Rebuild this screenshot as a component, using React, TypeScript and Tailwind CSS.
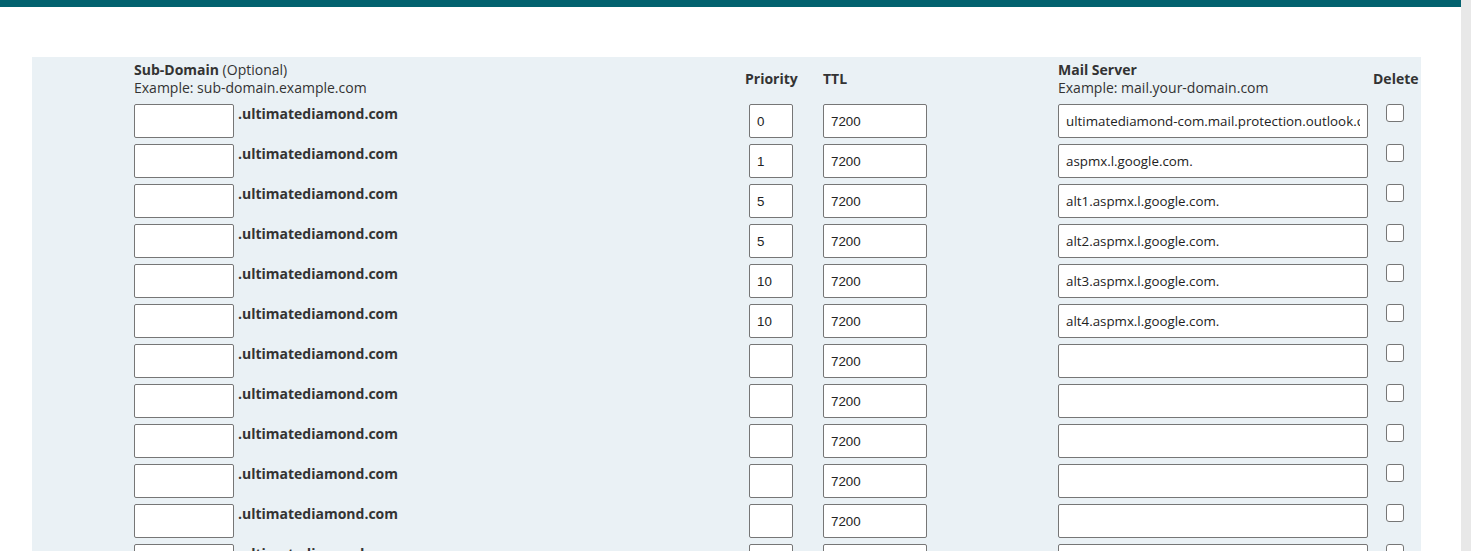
import React from "react";

const SUFFIX = ".ultimatediamond.com";

// MX records, empty ones pad the form out
const records = [
  { priority: "0", ttl: "7200", server: "ultimatediamond-com.mail.protection.outlook.com." },
  { priority: "1", ttl: "7200", server: "aspmx.l.google.com." },
  { priority: "5", ttl: "7200", server: "alt1.aspmx.l.google.com." },
  { priority: "5", ttl: "7200", server: "alt2.aspmx.l.google.com." },
  { priority: "10", ttl: "7200", server: "alt3.aspmx.l.google.com." },
  { priority: "10", ttl: "7200", server: "alt4.aspmx.l.google.com." },
  { priority: "", ttl: "7200", server: "" },
  { priority: "", ttl: "7200", server: "" },
  { priority: "", ttl: "7200", server: "" },
  { priority: "", ttl: "7200", server: "" },
  { priority: "", ttl: "7200", server: "" },
  { priority: "", ttl: "7200", server: "" },
  { priority: "", ttl: "7200", server: "" },
];

const inputBase =
  "h-[34px] border border-[#767676] rounded-[2px] bg-white px-[7px] text-[13.33px] text-[#222] outline-none";

export default function App() {
  return (
    <div className="flex min-h-screen bg-white font-['Open_Sans',sans-serif] text-[14px] leading-[18px] text-[#333]">
      <div className="flex-1 flex flex-col">
        {/* top brand bar */}
        <div className="h-[7px] bg-[#03626f] shrink-0" />

        <div className="pl-[32px] pr-[40px] pt-[50px]">
          <div className="bg-[#eaf1f5] pl-[102px] pr-[4px] pt-[4px] pb-[20px]">
            {/* header row */}
            <div className="flex items-center h-[36px]">
              <div className="w-[611px]">
                <div>
                  <span className="font-bold">Sub-Domain</span> (Optional)
                </div>
                <div>Example: sub-domain.example.com</div>
              </div>
              <div className="w-[52px] text-center font-bold">Priority</div>
              <div className="w-[26px]" />
              <div className="w-[235px] font-bold">TTL</div>
              <div className="w-[315px]">
                <div className="font-bold">Mail Server</div>
                <div>Example: mail.your-domain.com</div>
              </div>
              <div className="w-[44px] text-center font-bold">Delete</div>
            </div>

            <div className="flex flex-col gap-[6px] mt-[7px]">
              {records.map((r, i) => (
                <div key={i} className="flex items-start">
                  <div className="w-[611px] flex items-start gap-[4px]">
                    <input type="text" className={`${inputBase} w-[100px]`} />
                    <span className="font-bold leading-[20px]">{SUFFIX}</span>
                  </div>
                  <div className="w-[52px] flex justify-center">
                    <input
                      type="text"
                      defaultValue={r.priority}
                      className={`${inputBase} w-[44px] font-['Liberation_Sans',sans-serif]`}
                    />
                  </div>
                  <div className="w-[26px]" />
                  <div className="w-[235px]">
                    <input
                      type="text"
                      defaultValue={r.ttl}
                      className={`${inputBase} w-[104px] font-['Liberation_Sans',sans-serif]`}
                    />
                  </div>
                  <div className="w-[315px]">
                    <input
                      type="text"
                      defaultValue={r.server}
                      className={`${inputBase} w-[310px] font-['Open_Sans',sans-serif]`}
                    />
                  </div>
                  <div className="w-[44px] flex justify-center">
                    <input
                      type="checkbox"
                      className="appearance-none w-[18px] h-[18px] border border-[#767676] rounded-[3px] bg-white"
                    />
                  </div>
                </div>
              ))}
            </div>
          </div>
        </div>
      </div>

      {/* scrollbar gutter */}
      <div className="w-[10px] bg-[#e8e8e8] shrink-0" />
    </div>
  );
}
